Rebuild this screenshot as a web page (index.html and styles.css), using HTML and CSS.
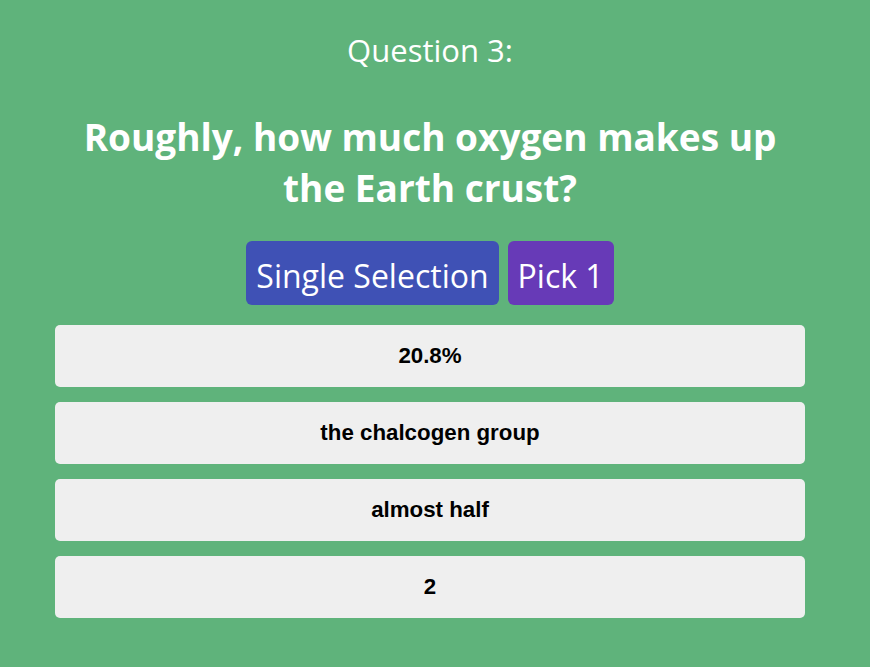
FILE: index.html
```html
<!DOCTYPE html>
<html>
<head>
<meta charset="utf-8">
<link rel="stylesheet" href="styles.css">
</head>
<body>
<div class="quiz">
  <h2 class="qnum">Question 3:</h2>
  <h1 class="qtext">Roughly, how much oxygen makes up the Earth crust?</h1>
  <div class="tags">
    <span class="tag tag-type">Single Selection</span>
    <span class="tag tag-pick">Pick 1</span>
  </div>
  <div class="answers">
    <div class="answer">20.8%</div>
    <div class="answer">the chalcogen group</div>
    <div class="answer">almost half</div>
    <div class="answer">2</div>
  </div>
</div>
</body>
</html>
```
FILE: styles.css
```css
html, body {
  margin: 0;
  padding: 0;
  background: #5fb37b;
  height: 100%;
}
body {
  font-family: "Open Sans", "Noto Sans", sans-serif;
  color: #fff;
}
.quiz {
  width: 750px;
  margin: 0 0 0 55px;
  padding-top: 28px;
  text-align: center;
}
.qnum {
  margin: 0;
  font-weight: 400;
  font-size: 31px;
  line-height: 44px;
}
.qtext {
  margin: 39px 10px 0;
  font-weight: 700;
  font-size: 37px;
  line-height: 51px;
}
.tags {
  display: flex;
  justify-content: center;
  gap: 9px;
  margin-top: 28px;
}
.tag {
  display: inline-block;
  height: 61px;
  line-height: 64px;
  padding: 3px 10px 0;
  border-radius: 6px;
  font-size: 32px;
  color: #fff;
}
.tag-type { background: #3f51b5; }
.tag-pick { background: #673ab7; }
.answers {
  margin-top: 20px;
  display: flex;
  flex-direction: column;
  gap: 15px;
}
.answer {
  height: 62px;
  line-height: 62px;
  background: #efefef;
  border-radius: 5px;
  color: #000;
  font-family: "Liberation Sans", Arial, sans-serif;
  font-weight: 700;
  font-size: 22.3px;
}
```
